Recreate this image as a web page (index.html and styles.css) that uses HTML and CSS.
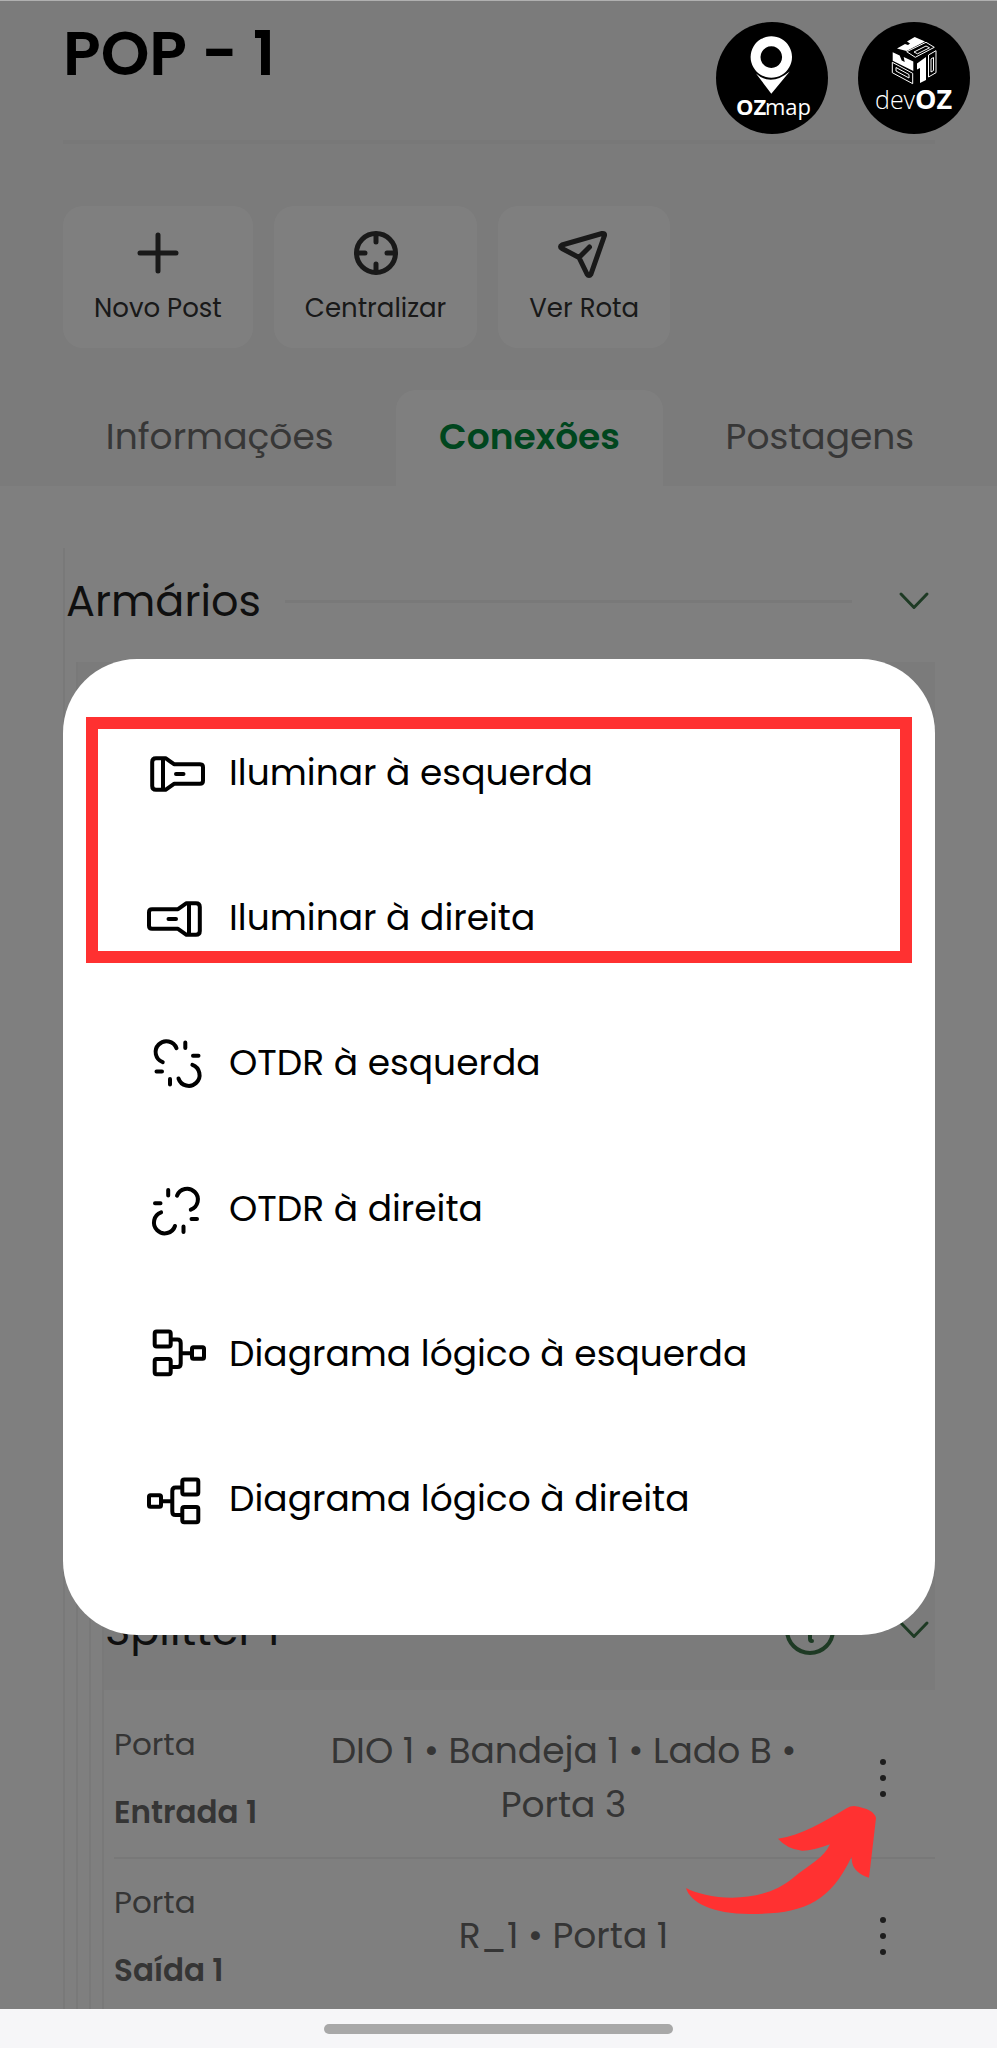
FILE: index.html
```html
<!DOCTYPE html>
<html lang="pt-BR">
<head>
<meta charset="utf-8">
<meta name="viewport" content="width=device-width, initial-scale=1">
<title>POP - 1</title>
<link rel="stylesheet" href="styles.css">
</head>
<body>
<div class="app">
  <header class="top">
    <h1 class="title">POP - 1</h1>
    <div class="actions">
      <button class="action" type="button">
        <svg class="action-icon" viewBox="0 0 52 52"><path d="M26 8v36M8 26h36"/></svg>
        Novo Post
      </button>
      <button class="action" type="button">
        <svg class="action-icon" viewBox="0 0 52 52"><circle cx="26" cy="26" r="19.5"/><path d="M26 7v8M26 37v8M7 26h8M37 26h8"/></svg>
        Centralizar
      </button>
      <button class="action" type="button">
        <svg class="action-icon" viewBox="0 0 52 52"><path d="M44 6.500L4 18Q1 19.500 4 21.500L21 30.500 29 47Q31 50 33 47L46.500 8.500Q47 6 44 6.500zM21 30.500L31.500 20"/></svg>
        Ver Rota
      </button>
    </div>
    <nav class="tabs">
      <button class="tab tab-info" type="button">Informações</button>
      <button class="tab tab-active" type="button">Conexões</button>
      <button class="tab tab-posts" type="button">Postagens</button>
    </nav>
  </header>

  <main class="content">
    <section class="level">
      <div class="group-head">
        <h2 class="group-title">Armários</h2>
        <span class="rule"></span>
        <svg class="chevron" viewBox="0 0 32 20"><path d="M3 3l13 13.500L29 3"/></svg>
      </div>
      <div class="level level-nested">
        <div class="band"></div>
        <div class="level level-nested">
          <div class="band"></div>
          <div class="level level-nested level-device">
            <div class="group-head device-head">
              <h3 class="group-title">Splitter 1</h3>
              <span class="spacer"></span>
              <svg class="info" viewBox="0 0 52 52"><circle cx="26" cy="26" r="23"/><path d="M26 15.500v.5M24 24h2v11q0 2 2 2"/></svg>
              <svg class="chevron" viewBox="0 0 32 20"><path d="M3 3l13 13.500L29 3"/></svg>
            </div>
            <div class="port">
              <div class="port-name"><span>Porta</span><strong>Entrada 1</strong></div>
              <p class="port-link">DIO 1 • Bandeja 1 • Lado B • Porta 3</p>
              <button class="more" type="button" aria-label="Mais opções"><svg viewBox="0 0 12 44"><circle cx="6" cy="6" r="3"/><circle cx="6" cy="22" r="3"/><circle cx="6" cy="38" r="3"/></svg></button>
            </div>
            <div class="port">
              <div class="port-name"><span>Porta</span><strong>Saída 1</strong></div>
              <p class="port-link">R_1 • Porta 1</p>
              <button class="more" type="button" aria-label="Mais opções"><svg viewBox="0 0 12 44"><circle cx="6" cy="6" r="3"/><circle cx="6" cy="22" r="3"/><circle cx="6" cy="38" r="3"/></svg></button>
            </div>
          </div>
        </div>
      </div>
    </section>
  </main>

  <div class="overlay">
    <div class="sheet" role="dialog" aria-label="Opções da porta">
      <button class="option" type="button">
        <svg class="option-icon" viewBox="0 0 60 60"><path d="M9 15.200h9.500l8.500 6h26q3 0 3 3v13.600q0 3-3 3h-26l-8.500 6H9q-3.800 0-3.800-3.800v-24q0-3.800 3.800-3.800zM16 15.500v31M29 31h7.500"/></svg>
        Iluminar à esquerda
      </button>
      <button class="option" type="button">
        <svg class="option-icon" viewBox="0 0 60 60"><path transform="translate(58 0) scale(-1 1)" d="M9 15.200h9.500l8.500 6h26q3 0 3 3v13.600q0 3-3 3h-26l-8.500 6H9q-3.800 0-3.800-3.800v-24q0-3.800 3.800-3.800zM16 15.500v31M29 31h7.500"/></svg>
        Iluminar à direita
      </button>
      <button class="option" type="button">
        <svg class="option-icon" viewBox="0 0 60 60"><path d="M29.500 15.200A10.800 10.800 0 1 0 15.700 29.200M31.500 45.500A10.800 10.800 0 1 0 45.400 31.900M38.300 9.500v5.500M46 22.800h5.500M9.500 38.500h5.500M23 46v5.500"/></svg>
        OTDR à esquerda
      </button>
      <button class="option" type="button">
        <svg class="option-icon" viewBox="0 0 60 60"><path transform="translate(59.500 1.500) scale(-1 1)" d="M29.500 15.200A10.800 10.800 0 1 0 15.700 29.200M31.500 45.500A10.800 10.800 0 1 0 45.400 31.900M38.300 9.500v5.500M46 22.800h5.500M9.500 38.500h5.500M23 46v5.500"/></svg>
        OTDR à direita
      </button>
      <button class="option" type="button">
        <svg class="option-icon" viewBox="0 0 60 60"><rect x="7.700" y="7.400" width="16" height="15.200" rx="2"/><rect x="7.700" y="35" width="16" height="15.200" rx="2"/><rect x="45" y="23.200" width="12" height="11.600" rx="1.500"/><path d="M25.500 15.500h5q3.200 0 3.200 3.500v20.500q0 3.500-3.200 3.500h-5M34 29.200h10"/></svg>
        Diagrama lógico à esquerda
      </button>
      <button class="option" type="button">
        <svg class="option-icon" viewBox="0 0 60 60"><g transform="translate(59 3) scale(-1 1)"><rect x="7.700" y="7.400" width="16" height="15.200" rx="2"/><rect x="7.700" y="35" width="16" height="15.200" rx="2"/><rect x="45" y="23.200" width="12" height="11.600" rx="1.500"/><path d="M25.500 15.500h5q3.200 0 3.200 3.500v20.500q0 3.500-3.200 3.500h-5M34 29.200h10"/></g></svg>
        Diagrama lógico à direita
      </button>
      <span class="highlight"></span>
    </div>
  </div>

  <svg class="arrow" viewBox="0 0 196 114"><path d="M170 2Q190 5 192 14L185 73.700Q170 69 168 58L167.500 53C145 100 118 110 66 110C28 110 6 98 2 84C22 95 76 102 109 74C126 60 140 54 146 40.300Q128 47 118 46.700Q103 45 94 34.700C118 31 138 19 163 4Q166 2 170 2z"/></svg>

  <div class="logos">
    <svg class="logo" viewBox="0 0 112 112" role="img" aria-label="OZmap">
      <circle cx="56" cy="56" r="56"/>
      <g class="logo-fill"><path fill-rule="evenodd" d="M55.300 14.300a20.700 20.700 0 1 0 .01 0zM55.300 24.300a10.800 10.800 0 1 1-.01 0z"/><path d="M40 51.500Q55 65 73.700 49.500L55.300 71.700z"/></g>
      <text class="ozmap-bold" x="20" y="93">OZ</text><text class="ozmap-light" x="49" y="93">map</text>
    </svg>
    <svg class="logo" viewBox="0 0 112 112" role="img" aria-label="devOZ">
      <circle cx="56" cy="56" r="56"/>
      <g class="logo-fill"><path d="M39 26.500L47 22l3 1 2-1.500-3-2L56.700 15l10.300 4.500-18.500 9.500z"/><path d="M34.700 30.300l7 3.200 2 5 3 1.500-1-5 9.600 4.500V49L34.700 38.700z"/><path d="M59 41.500l9-6.500v23l-6 3V46l-3 1.500z"/></g>
      <g class="logo-line"><path d="M34.300 40.300l20.400 11v10.400l-20.400-11zM38 45.500l13 7v3.500l-13-7zM70.500 33l7.500-4.300v22L70.500 55zM73 37l2.500-1.500v13L73 50zM48.700 29.700l19.300-9.400 8.300 5-19 10zM56 30l12-6 3.500 1.800-12 6z"/></g>
      <text class="devoz-light" x="17" y="87">dev</text><text class="devoz-bold" x="57" y="87">OZ</text>
    </svg>
  </div>

  <footer class="navbar"><span class="handle"></span></footer>
</div>
</body>
</html>
```
FILE: styles.css
```css
* { box-sizing: border-box; }

body {
  margin: 0;
  background: #f6f6f8;
  font-family: Poppins, Inter, "Open Sans", sans-serif;
}

button {
  border: 0;
  margin: 0;
  padding: 0;
  background: none;
  font: inherit;
  color: inherit;
}

.app {
  position: relative;
  display: flex;
  flex-direction: column;
  min-height: 100vh;
  background: #fff;
}

.top {
  background: #f6f6f6;
  padding-left: 63px;
}

.title {
  margin: 0 62px 0 0;
  height: 144px;
  padding-top: 18px;
  border-bottom: 4px solid #f0f0f0;
  font-size: 62px;
  line-height: 72px;
  font-weight: 600;
  color: #000;
}

.actions {
  display: flex;
  gap: 21px;
  padding-top: 62px;
}

.action {
  display: flex;
  flex-direction: column;
  align-items: center;
  gap: 11px;
  height: 142px;
  padding: 21px 31px 0;
  border-radius: 20px;
  background: #fff;
  color: #333;
  font-size: 26px;
  line-height: 36px;
}

.action-icon {
  width: 52px;
  height: 52px;
  fill: none;
  stroke: #333;
  stroke-width: 5;
  stroke-linecap: round;
  stroke-linejoin: round;
}

.tabs {
  display: flex;
  gap: 20px;
  padding: 42px 40px 0 0;
}

.tab {
  height: 96px;
  padding-bottom: 2px;
  color: #6e6e6e;
  font-size: 36px;
  line-height: 94px;
  border-radius: 20px 20px 0 0;
}

.tab-info { flex: 313 1 0; }
.tab-posts { flex: 274 1 0; }

.tab-active {
  flex: 266 1 0;
  background: #fff;
  color: #008c3c;
  font-weight: 600;
}

.content {
  flex: 1;
  padding: 62px 62px 0 63px;
}

.level { border-left: 2px solid #f3f3f3; }
.content > .level { min-height: 100%; }
.level-nested { margin-left: 11px; }
.level-device { margin-top: 668px; }

.band {
  height: 120px;
  background: #f6f6f6;
}

.group-head {
  display: flex;
  align-items: center;
  height: 114px;
  padding: 0 5px 8px 1px;
}

.device-head {
  height: 120px;
  padding-bottom: 0;
  background: #f6f6f6;
}

.group-title {
  margin: 0;
  font-size: 43px;
  line-height: 56px;
  font-weight: 400;
  color: #1f1f1f;
}

.rule {
  flex: 1;
  height: 3px;
  margin: 0 46px 0 24px;
  background: #f3f3f3;
}

.spacer { flex: 1; }

.chevron {
  width: 32px;
  height: 20px;
  fill: none;
  stroke: #3c7549;
  stroke-width: 3;
  stroke-linecap: round;
  stroke-linejoin: round;
}

.info {
  width: 52px;
  height: 52px;
  margin-right: 62px;
  fill: none;
  stroke: #3c7549;
  stroke-width: 4;
  stroke-linecap: round;
}

.port {
  display: flex;
  align-items: center;
  margin-left: 10px;
  height: 169px;
  padding-top: 8px;
  border-bottom: 2px solid #f0f0f0;
  color: #6a6a6a;
}

.port:last-child {
  height: 150px;
  padding-top: 4px;
  border-bottom: 0;
}

.port-name {
  width: 202px;
  display: flex;
  flex-direction: column;
  gap: 24px;
  font-size: 31px;
  line-height: 44px;
}

.port-name strong { font-weight: 600; }

.port-link {
  flex: 1;
  margin: 0 20px 0 0;
  text-align: center;
  font-size: 36px;
  line-height: 54px;
}

.more {
  width: 104px;
  height: 44px;
}

.more svg {
  display: block;
  width: 12px;
  height: 44px;
  margin: 0 auto;
  fill: #3a3a3a;
}

.overlay {
  position: absolute;
  inset: 0 0 39px;
  padding: 659px 62px 0 63px;
  background: rgba(0, 0, 0, 0.5);
  border-top: 1px solid #b0b0b0;
}

.sheet {
  position: relative;
  display: grid;
  grid-auto-rows: 1fr;
  min-height: 976px;
  margin-top: -1px;
  padding: 41px 0 63px 84px;
  border-radius: 74px;
  background: #fff;
}

.option {
  display: flex;
  align-items: center;
  gap: 22px;
  color: #000;
  font-size: 36px;
  line-height: 48px;
  text-align: left;
}

.option-icon {
  flex: none;
  width: 60px;
  height: 60px;
  fill: none;
  stroke: #000;
  stroke-width: 4;
  stroke-linecap: round;
  stroke-linejoin: round;
}

.highlight {
  position: absolute;
  top: 58px;
  left: 23px;
  right: 23px;
  height: 246px;
  border: 12px solid #ff3131;
  pointer-events: none;
}

.arrow {
  position: absolute;
  right: 117px;
  bottom: 130px;
  width: 196px;
  height: 114px;
  fill: #ff3131;
}

.logos {
  position: absolute;
  top: 22px;
  right: 27px;
  display: flex;
  gap: 30px;
}

.logo {
  width: 112px;
  height: 112px;
}

.logo-fill, .logo text { fill: #fff; }
.logo-line { fill: none; stroke: #fff; stroke-width: 1; }

.logo text { font-family: "Open Sans", "Noto Sans", sans-serif; }
.ozmap-bold { font-size: 22px; font-weight: 700; }
.ozmap-light { font-size: 22px; font-weight: 400; }
.devoz-light { font-size: 25px; font-weight: 300; }
.devoz-bold { font-size: 27px; font-weight: 700; }

.navbar {
  display: flex;
  align-items: center;
  justify-content: center;
  height: 39px;
  background: #f6f6f8;
}

.handle {
  width: 35%;
  height: 10px;
  border-radius: 5px;
  background: #a8a8a8;
}
```
